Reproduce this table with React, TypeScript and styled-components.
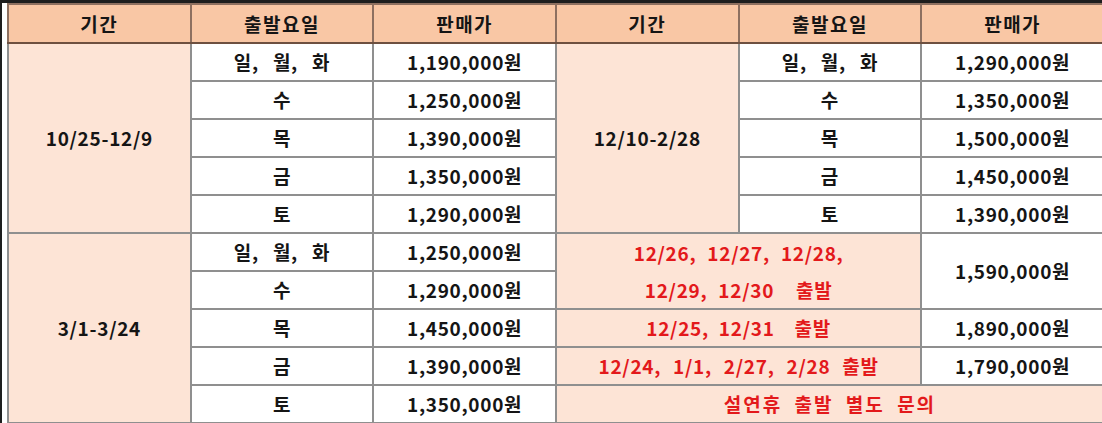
import React from "react";
import styled, { createGlobalStyle } from "styled-components";

const GlobalStyle = createGlobalStyle`
  html, body {
    margin: 0;
    padding: 0;
    background: #ffffff;
    overflow: hidden;
  }
  body {
    font-family: "Noto Sans CJK KR", "Noto Sans", sans-serif;
  }
`;

const Frame = styled.div`
  width: 1102px;
  height: 423px;
  box-sizing: border-box;
  border-top: 3px solid #1e1e1e;
  border-left: 2px solid #1e1e1e;
  padding-left: 5px;
  background: #ffffff;
  overflow: hidden;
`;

const Table = styled.table`
  width: 1098px;
  table-layout: fixed;
  border-collapse: collapse;
  font-weight: 700;
  font-size: 19px;
  color: #151515;
`;

const Head = styled.th`
  height: 37px;
  padding: 0;
  background: #f9c7a5;
  border: 2px solid #8e7060;
  border-bottom-color: #6e5040;
  font-weight: 700;
  font-size: 19px;
  line-height: 24px;
  letter-spacing: 1.5px;
  text-align: center;
  vertical-align: middle;
`;

type Tone = "white" | "peach";

const Cell = styled.td<{
  $tone?: Tone;
  $red?: boolean;
  $gap?: number;
  $track?: number;
}>`
  height: 36px;
  padding: 0;
  background: ${({ $tone }) => ($tone === "peach" ? "#fde4d6" : "#ffffff")};
  color: ${({ $red }) => ($red ? "#e3191b" : "#151515")};
  border: 2px solid #8f8f8f;
  text-align: center;
  vertical-align: middle;
  white-space: pre;
  line-height: 24px;
  letter-spacing: ${({ $track }) => $track ?? 0.7}px;
  word-spacing: ${({ $gap }) => $gap ?? 0}px;
`;

const TwoLine = styled.span`
  display: block;
  line-height: 37px;
`;

const prices1 = [
  ["일, 월, 화", "1,190,000원", "일, 월, 화", "1,290,000원"],
  ["수", "1,250,000원", "수", "1,350,000원"],
  ["목", "1,390,000원", "목", "1,500,000원"],
  ["금", "1,350,000원", "금", "1,450,000원"],
  ["토", "1,290,000원", "토", "1,390,000원"],
];

const prices2 = [
  ["일, 월, 화", "1,250,000원"],
  ["수", "1,290,000원"],
  ["목", "1,450,000원"],
  ["금", "1,390,000원"],
  ["토", "1,350,000원"],
];

export default function App() {
  return (
    <>
      <GlobalStyle />
      <Frame>
        <Table>
          <thead>
            <tr>
              <Head>기간</Head>
              <Head>출발요일</Head>
              <Head>판매가</Head>
              <Head>기간</Head>
              <Head>출발요일</Head>
              <Head>판매가</Head>
            </tr>
          </thead>
          <tbody>
            {prices1.map((r, i) => (
              <tr key={"a" + i}>
                {i === 0 && (
                  <Cell $tone="peach" rowSpan={5}>
                    10/25-12/9
                  </Cell>
                )}
                <Cell $gap={9}>{r[0]}</Cell>
                <Cell>{r[1]}</Cell>
                {i === 0 && (
                  <Cell $tone="peach" rowSpan={5}>
                    12/10-2/28
                  </Cell>
                )}
                <Cell $gap={9}>{r[2]}</Cell>
                <Cell>{r[3]}</Cell>
              </tr>
            ))}
            <tr>
              <Cell $tone="peach" rowSpan={5}>
                3/1-3/24
              </Cell>
              <Cell $gap={9}>{prices2[0][0]}</Cell>
              <Cell>{prices2[0][1]}</Cell>
              <Cell $tone="peach" $red $gap={6} colSpan={2} rowSpan={2}>
                <TwoLine>12/26, 12/27, 12/28,</TwoLine>
                <TwoLine>{"12/29, 12/30  출발"}</TwoLine>
              </Cell>
              <Cell rowSpan={2}>1,590,000원</Cell>
            </tr>
            <tr>
              <Cell $gap={9}>{prices2[1][0]}</Cell>
              <Cell>{prices2[1][1]}</Cell>
            </tr>
            <tr>
              <Cell>{prices2[2][0]}</Cell>
              <Cell>{prices2[2][1]}</Cell>
              <Cell $tone="peach" $red $gap={5} colSpan={2}>
                {"12/25, 12/31  출발"}
              </Cell>
              <Cell>1,890,000원</Cell>
            </tr>
            <tr>
              <Cell>{prices2[3][0]}</Cell>
              <Cell>{prices2[3][1]}</Cell>
              <Cell $tone="peach" $red $gap={7} colSpan={2}>
                12/24, 1/1, 2/27, 2/28 출발
              </Cell>
              <Cell>1,790,000원</Cell>
            </tr>
            <tr>
              <Cell>{prices2[4][0]}</Cell>
              <Cell>{prices2[4][1]}</Cell>
              <Cell $tone="peach" $red $gap={6} $track={2} colSpan={3}>
                설연휴 출발 별도 문의
              </Cell>
            </tr>
          </tbody>
        </Table>
      </Frame>
    </>
  );
}
